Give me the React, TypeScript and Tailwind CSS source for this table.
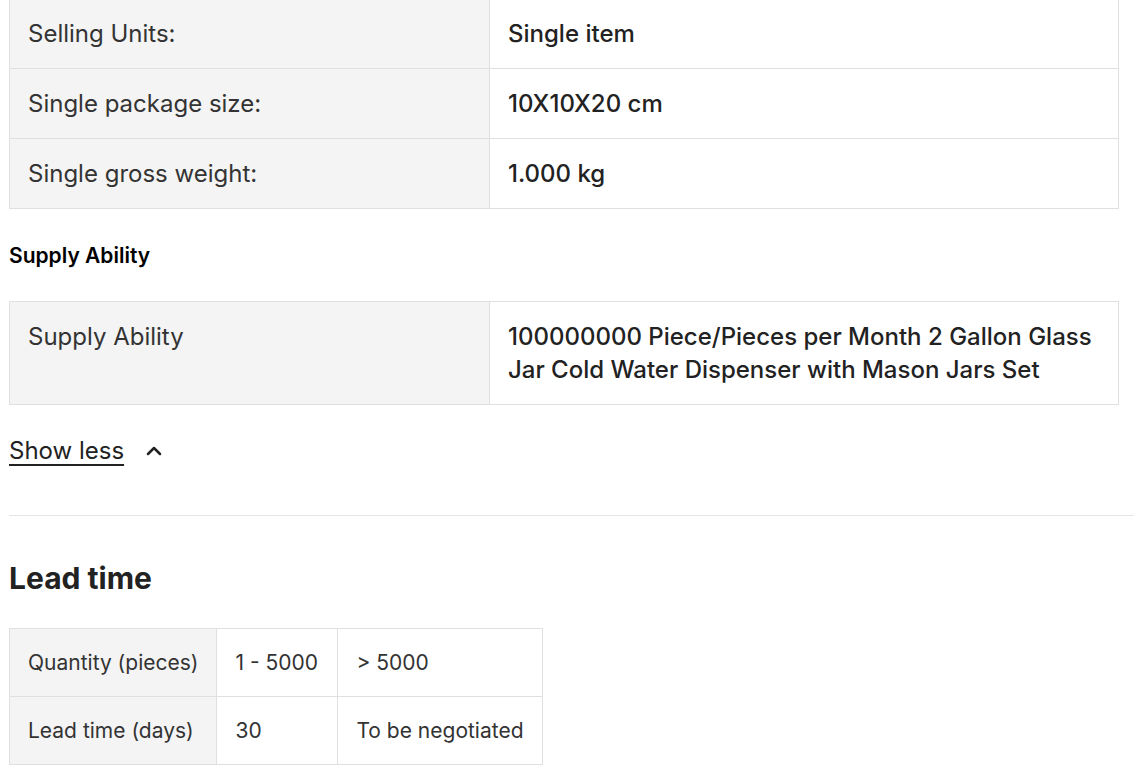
import { ChevronUp } from "lucide-react";

const attrs = [
  { label: "Selling Units:", value: "Single item" },
  { label: "Single package size:", value: "10X10X20 cm" },
  { label: "Single gross weight:", value: "1.000 kg" },
];

const leadRows = [
  ["Quantity (pieces)", "1 - 5000", "> 5000"],
  ["Lead time (days)", "30", "To be negotiated"],
];

function AttrTable({ rows }: { rows: { label: string; value: string }[] }) {
  return (
    <table className="w-[1110px] border-collapse table-fixed">
      <tbody>
        {rows.map((r) => (
          <tr key={r.label}>
            <td className="w-[480px] border border-[#e0e0e0] bg-[#f4f4f4] px-[18px] py-[18px] align-top text-[24px] leading-[33px] text-[#333]">
              {r.label}
            </td>
            <td className="border border-[#e0e0e0] px-[18px] py-[18px] align-top text-[24px] leading-[33px] font-medium text-[#222]">
              {r.value}
            </td>
          </tr>
        ))}
      </tbody>
    </table>
  );
}

export default function App() {
  return (
    <div className="min-h-screen bg-white pl-[9px] font-['Inter',sans-serif] text-[#222]">
      <div className="-mt-[2px]">
        <AttrTable rows={attrs} />
      </div>

      <h4 className="mt-[35px] text-[21px] font-semibold leading-[24px] text-black">Supply Ability</h4>

      <div className="mt-[33px]">
        <AttrTable
          rows={[
            {
              label: "Supply Ability",
              value:
                "100000000 Piece/Pieces per Month 2 Gallon Glass Jar Cold Water Dispenser with Mason Jars Set",
            },
          ]}
        />
      </div>

      <button className="mt-[31px] flex items-center gap-[18px] text-[24px] leading-[30px] text-[#222]">
        <span className="underline underline-offset-[5px] decoration-[1.5px]">Show less</span>
        <ChevronUp className="h-[24px] w-[24px]" strokeWidth={2.5} />
      </button>

      <div className="mt-[49px] h-px bg-[#e5e5e5]" />

      <h2 className="mt-[44px] text-[30px] font-bold leading-[36px] text-[#222]">Lead time</h2>

      <table className="mt-[32px] border-collapse whitespace-nowrap">
        <tbody>
          {leadRows.map((row) => (
            <tr key={row[0]} className="h-[68px]">
              <td className="w-[207px] border border-[#e0e0e0] bg-[#f4f4f4] px-[18px] text-[21px] text-[#333]">
                {row[0]}
              </td>
              <td className="w-[121px] border border-[#e0e0e0] px-[18px] text-[21px] text-[#333]">
                {row[1]}
              </td>
              <td className="w-[205px] border border-[#e0e0e0] px-[18px] text-[21px] text-[#333]">
                {row[2]}
              </td>
            </tr>
          ))}
        </tbody>
      </table>
    </div>
  );
}
